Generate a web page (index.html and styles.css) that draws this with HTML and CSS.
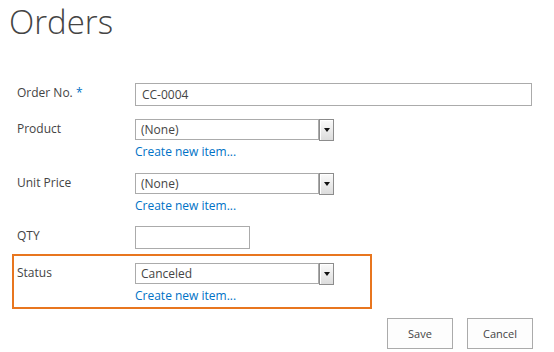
FILE: index.html
```html
<!DOCTYPE html>
<html lang="en">
<head>
    <meta charset="UTF-8">
    <title>Orders</title>
    <link rel="stylesheet" href="styles.css">
</head>
<body>
    <h1>Orders</h1>

    <form class="item-form">
        <div class="row">
            <label class="field-label">Order No. <span class="req">*</span></label>
            <div class="field">
                <input class="text-input wide" type="text" value="CC-0004">
            </div>
        </div>

        <div class="row">
            <label class="field-label">Product</label>
            <div class="field">
                <div class="dropdown">
                    <span class="dropdown-value">(None)</span>
                    <span class="dropdown-btn"><span class="arrow"></span></span>
                </div>
                <a class="new-link" href="#">Create new item...</a>
            </div>
        </div>

        <div class="row">
            <label class="field-label">Unit Price</label>
            <div class="field">
                <div class="dropdown">
                    <span class="dropdown-value">(None)</span>
                    <span class="dropdown-btn"><span class="arrow"></span></span>
                </div>
                <a class="new-link" href="#">Create new item...</a>
            </div>
        </div>

        <div class="row row-qty">
            <label class="field-label">QTY</label>
            <div class="field">
                <input class="text-input short" type="text" value="">
            </div>
        </div>

        <div class="row row-status">
            <label class="field-label">Status</label>
            <div class="field">
                <div class="dropdown">
                    <span class="dropdown-value">Canceled</span>
                    <span class="dropdown-btn"><span class="arrow"></span></span>
                </div>
                <a class="new-link" href="#">Create new item...</a>
            </div>
        </div>

        <div class="actions">
            <button type="button">Save</button>
            <button type="button">Cancel</button>
        </div>
    </form>
</body>
</html>
```

FILE: styles.css
```css
body {
    margin: 0;
    font-family: "Open Sans", "Noto Sans", Arial, sans-serif;
    font-size: 12px;
    color: #444;
    background-color: #fff;
}
h1 {
    margin: 0;
    padding: 0 0 0 9px;
    height: 60px;
    font-size: 33px;
    font-weight: 300;
    line-height: 44px;
    color: #444;
}
.item-form {
    padding: 23px 0 0 12px;
    width: 360px;
}
.row {
    display: flex;
    padding-left: 5px;
}
.field-label {
    width: 118px;
    flex: none;
    padding-top: 1px;
    line-height: 18px;
}
.req {
    color: #0072c6;
}
.row:nth-child(1) { margin-bottom: 13px; }
.row:nth-child(2) { margin-bottom: 12px; }
.row:nth-child(3) { margin-bottom: 11px; }
.row-qty { margin-bottom: 5px; }
.text-input {
    box-sizing: border-box;
    height: 23px;
    border: 1px solid #ababab;
    padding: 0 6px;
    font-family: inherit;
    font-size: 12px;
    color: #444;
    outline: none;
}
.wide {
    width: 397px;
}
.short {
    width: 115px;
}
.dropdown {
    display: flex;
    align-items: center;
    width: 200px;
    height: 21px;
}
.dropdown-value {
    box-sizing: border-box;
    width: 184px;
    height: 21px;
    border: 1px solid #ababab;
    padding: 0 5px;
    line-height: 19px;
}
.dropdown-btn {
    box-sizing: border-box;
    width: 15px;
    height: 22px;
    border: 1px solid #8c8c8c;
    box-shadow: inset 1px 1px 0 #fff;
    background: linear-gradient(#fafafa, #dcdcdc);
    display: flex;
    align-items: center;
    justify-content: center;
}
.arrow {
    width: 0;
    height: 0;
    border-left: 3px solid transparent;
    border-right: 3px solid transparent;
    border-top: 4px solid #111;
}
.new-link {
    display: block;
    margin-top: 3px;
    line-height: 18px;
    color: #0072c6;
    text-decoration: none;
}
.row-status {
    border: 2px solid #e8761f;
    padding: 7px 0 0 3px;
    height: 44px;
}
.actions {
    display: flex;
    justify-content: flex-end;
    gap: 14px;
    margin-top: 9px;
    width: 521px;
}
button {
    width: 66px;
    height: 31px;
    border: 1px solid #ababab;
    background-color: #fdfdfd;
    font-family: inherit;
    font-size: 11px;
    color: #444;
}
```
